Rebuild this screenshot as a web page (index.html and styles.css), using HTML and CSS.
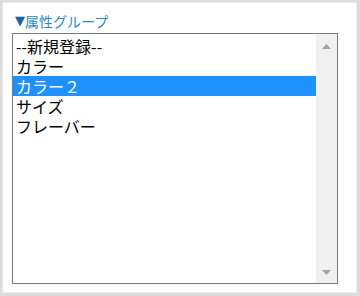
FILE: index.html
```html
<!DOCTYPE html>
<html lang="ja">
<head>
<meta charset="utf-8">
<title>属性グループ</title>
<link rel="stylesheet" href="styles.css">
</head>
<body>
<div class="panel">
  <h2 class="heading"><span class="tri">▼</span>属性グループ</h2>
  <div class="listbox">
    <ul class="options">
      <li class="option">--新規登録--</li>
      <li class="option">カラー</li>
      <li class="option selected">カラー２</li>
      <li class="option">サイズ</li>
      <li class="option">フレーバー</li>
    </ul>
    <div class="scrollbar">
      <svg class="arrow" width="9" height="5" viewBox="0 0 9 5"><polygon points="0,5 4.5,0 9,5" fill="#a3a3a3"/></svg>
      <svg class="arrow" width="9" height="5" viewBox="0 0 9 5"><polygon points="0,0 9,0 4.5,5" fill="#a3a3a3"/></svg>
    </div>
  </div>
</div>
</body>
</html>
```
FILE: styles.css
```css
html, body {
  margin: 0;
  padding: 0;
}
body {
  background: #dcdcdc;
  width: 360px;
  height: 296px;
  overflow: hidden;
  font-family: "Noto Sans CJK JP", "Noto Sans", sans-serif;
}
.panel {
  box-sizing: border-box;
  margin: 2px 3px 3px 2px;
  height: 291px;
  background: #ffffff;
  border: 1px solid #ececec;
  padding: 9px 0 0 9px;
}
.heading {
  margin: 0 0 3px 0;
  padding-left: 3px;
  font-size: 14px;
  font-weight: normal;
  line-height: 18px;
  height: 18px;
  color: #2b88c8;
  display: flex;
  align-items: center;
}
.tri {
  font-family: "DejaVu Sans", sans-serif;
  font-size: 13px;
  line-height: 18px;
  color: #17679e;
}
.listbox {
  box-sizing: border-box;
  width: 326px;
  height: 251px;
  border: 1px solid #7a7a7a;
  display: flex;
  background: #ffffff;
}
.options {
  list-style: none;
  margin: 0;
  padding: 2px 0 0 0;
  flex: 1;
}
.option {
  height: 20px;
  line-height: 20px;
  padding-left: 3px;
  font-size: 16px;
  color: #000000;
  white-space: nowrap;
}
.option.selected {
  background: #1e90ff;
  color: #ffffff;
}
.scrollbar {
  width: 21px;
  background: #f0f0f0;
  display: flex;
  flex-direction: column;
  align-items: center;
  justify-content: space-between;
  padding: 10px 0 8px 0;
}
.arrow {
  display: block;
}
```
